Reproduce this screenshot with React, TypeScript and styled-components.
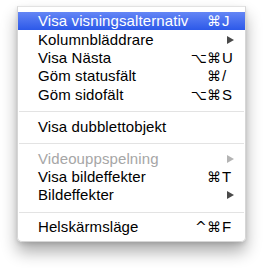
import styled, { createGlobalStyle } from 'styled-components';

type Item =
    | { kind: 'item'; label: string; mods?: string; keyChar?: string; submenu?: boolean; disabled?: boolean; active?: boolean }
    | { kind: 'sep' };

const items: Item[] = [
    { kind: 'item', label: 'Visa visningsalternativ', mods: '⌘', keyChar: 'J', active: true },
    { kind: 'item', label: 'Kolumnbläddrare', submenu: true },
    { kind: 'item', label: 'Visa Nästa', mods: '⌥⌘', keyChar: 'U' },
    { kind: 'item', label: 'Göm statusfält', mods: '⌘', keyChar: '/' },
    { kind: 'item', label: 'Göm sidofält', mods: '⌥⌘', keyChar: 'S' },
    { kind: 'sep' },
    { kind: 'item', label: 'Visa dubblettobjekt' },
    { kind: 'sep' },
    { kind: 'item', label: 'Videouppspelning', submenu: true, disabled: true },
    { kind: 'item', label: 'Visa bildeffekter', mods: '⌘', keyChar: 'T' },
    { kind: 'item', label: 'Bildeffekter', submenu: true },
    { kind: 'sep' },
    { kind: 'item', label: 'Helskärmsläge', mods: '^⌘', keyChar: 'F' },
];

function App(): JSX.Element {
    return (
        <>
            <GlobalStyle />
            <S_Page>
                <S_Menu>
                    {items.map((item, i) =>
                        item.kind === 'sep' ? (
                            <S_Separator key={i} />
                        ) : (
                            <S_Row key={i} $active={item.active} $disabled={item.disabled}>
                                <S_Label>{item.label}</S_Label>
                                {item.submenu ? (
                                    <S_Arrow $active={item.active} $disabled={item.disabled} />
                                ) : (
                                    <>
                                        <S_Mods>{item.mods}</S_Mods>
                                        <S_Key>{item.keyChar}</S_Key>
                                    </>
                                )}
                            </S_Row>
                        ),
                    )}
                </S_Menu>
            </S_Page>
        </>
    );
}
export default App;

const GlobalStyle = createGlobalStyle`
    html, body {
        margin: 0;
        padding: 0;
        background: #ffffff;
    }
`;
const S_Page = styled.div`
    width: 263px;
    height: 268px;
    padding: 6px 0 0 17px;
    box-sizing: border-box;
`;
const S_Menu = styled.div`
    width: 229px;
    box-sizing: border-box;
    padding: 5px 0 5px;
    background: rgba(255, 255, 255, 0.98);
    border: 1px solid #d6d6d6;
    border-top-color: #e2e2e2;
    border-radius: 0 0 5px 5px;
    box-shadow: 0 10px 16px rgba(0, 0, 0, 0.32), 0 2px 4px rgba(0, 0, 0, 0.12);
    font-family: 'Liberation Sans', Arial, sans-serif;
    font-size: 15px;
    letter-spacing: 0.1px;
`;
const S_Row = styled.div<{ $active?: boolean; $disabled?: boolean }>`
    display: grid;
    grid-template-columns: 1fr auto 13px;
    align-items: center;
    height: 18.4px;
    padding: 0 10px 0 20px;
    color: ${(p) => (p.$active ? '#ffffff' : p.$disabled ? '#a6a6a6' : '#000000')};
    background: ${(p) => (p.$active ? 'linear-gradient(#6486f5, #2c59e9)' : 'transparent')};
    line-height: 18px;
`;
const S_Label = styled.span`
    white-space: nowrap;
`;
const S_Mods = styled.span`
    font-family: 'DejaVu Sans', sans-serif;
    font-size: 14px;
    text-align: right;
    margin-right: 1px;
`;
const S_Key = styled.span`
    text-align: left;
`;
const S_Arrow = styled.span<{ $active?: boolean; $disabled?: boolean }>`
    grid-column: 2 / 4;
    justify-self: end;
    margin-right: 1px;
    width: 0;
    height: 0;
    border-top: 4.5px solid transparent;
    border-bottom: 4.5px solid transparent;
    border-left: 7px solid ${(p) => (p.$active ? '#ffffff' : p.$disabled ? '#b4b4b4' : '#4a4a4a')};
`;
const S_Separator = styled.div`
    height: 13.5px;
    box-sizing: border-box;
    padding-top: 7px;
    &::after {
        content: '';
        display: block;
        height: 1px;
        margin: 0 1px;
        background: #e3e3e3;
    }
`;
